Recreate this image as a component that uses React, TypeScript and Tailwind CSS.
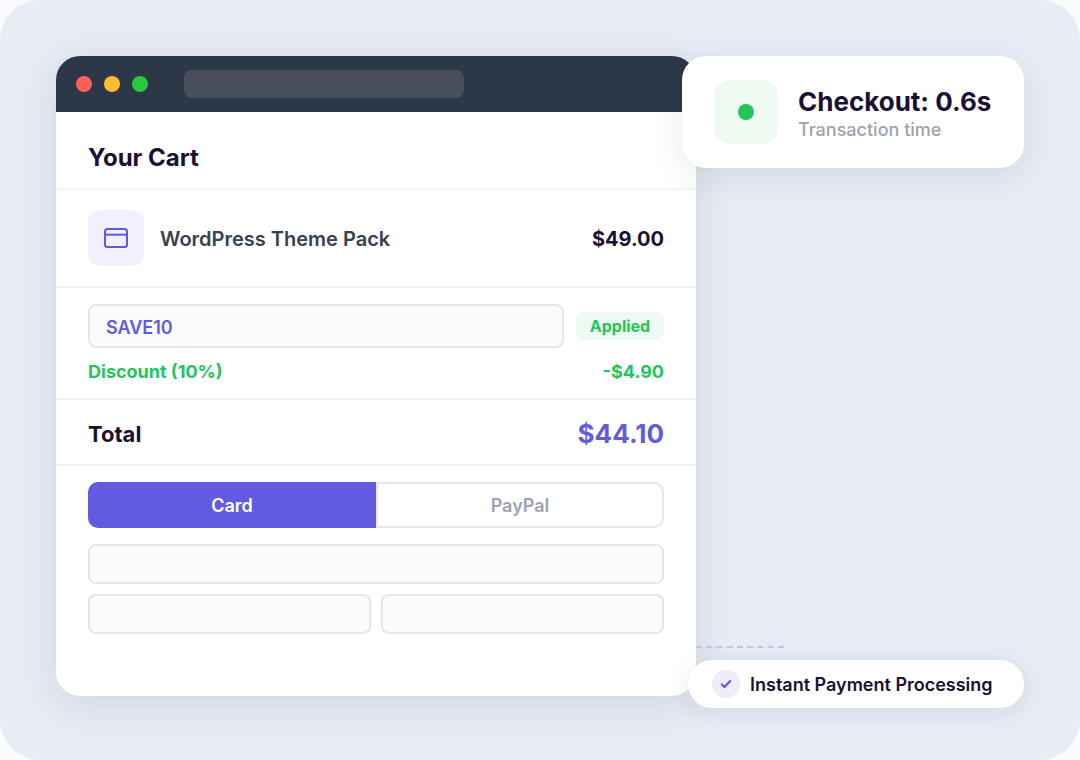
import { useState } from 'react'

const windowDots = [
  { name: 'close', className: 'bg-[#ff5f57]' },
  { name: 'minimize', className: 'bg-[#febc2e]' },
  { name: 'zoom', className: 'bg-[#28c840]' },
]

const fieldClass = 'h-10 w-full min-w-0 rounded-lg border-2 border-[#e5e7eb] bg-[#fafbfd] px-4 text-lg text-[#374151] outline-none'

function BrowserBar() {
  return (
    <div className="flex h-14 items-center gap-3 rounded-t-3xl bg-[#2c3747] px-5">
      {windowDots.map((dot) => (
        <span key={dot.name} className={`size-4 rounded-full ${dot.className}`} />
      ))}
      <div className="ml-6 h-7 w-70 rounded-lg bg-[#474f5d]" />
    </div>
  )
}

function WindowIcon() {
  return (
    <svg className="size-7" viewBox="0 0 28 28" fill="none" stroke="#6259d3" strokeWidth="2">
      <rect x="3" y="5" width="22" height="18" rx="2.5" />
      <path d="M3 10.7h22" />
    </svg>
  )
}

function PaymentTabs() {
  const [method, setMethod] = useState('card')
  const active = 'border-[#635bdf] bg-[#635bdf] text-white'
  const idle = 'border-[#e5e7eb] bg-white text-[#9ca3af]'

  return (
    <div className="flex h-[46px]">
      <button
        type="button"
        aria-pressed={method === 'card'}
        onClick={() => setMethod('card')}
        className={`flex-1 rounded-l-[10px] border-2 pt-0.5 text-lg font-semibold ${method === 'card' ? active : idle}`}
      >
        Card
      </button>
      <button
        type="button"
        aria-pressed={method === 'paypal'}
        onClick={() => setMethod('paypal')}
        className={`flex-1 rounded-r-[10px] border-2 pt-0.5 text-lg font-semibold ${method === 'paypal' ? active : idle}`}
      >
        PayPal
      </button>
    </div>
  )
}

function CartWindow() {
  const [coupon, setCoupon] = useState('SAVE10')

  return (
    <main className="relative w-full max-w-[640px] rounded-3xl bg-white shadow-[0_8px_40px_rgba(30,50,60,0.12)]">
      <BrowserBar />

      <header className="border-b-2 border-[#f1f3f5] px-8 pt-[30px] pb-3.5">
        <h1 className="text-2xl font-bold text-[#1a1033]">Your Cart</h1>
      </header>

      <section className="flex items-center gap-4 border-b-2 border-[#f1f3f5] px-8 py-5">
        <div className="flex size-14 shrink-0 items-center justify-center rounded-xl bg-[#f2f0fd]">
          <WindowIcon />
        </div>
        <span className="flex-1 pt-0.5 text-xl font-semibold text-[#374151]">WordPress Theme Pack</span>
        <span className="pt-0.5 text-xl font-bold text-[#1a1033]">$49.00</span>
      </section>

      <section className="border-b-2 border-[#f1f3f5] px-8 pt-4 pb-3.5">
        <div className="flex items-center gap-3">
          <input
            type="text"
            aria-label="Coupon code"
            value={coupon}
            onChange={(e) => setCoupon(e.target.value)}
            className="h-11 min-w-0 flex-1 rounded-lg border-2 border-[#e5e7eb] bg-[#fafbfd] px-4 pt-0.5 text-lg font-semibold text-[#635bdf] outline-none"
          />
          <span className="flex h-7 w-22 items-center justify-center rounded-lg bg-[#ecfaf2] text-base font-bold text-[#22c55e]">
            Applied
          </span>
        </div>
        <div className="mt-3 flex justify-between text-lg leading-6 font-bold text-[#22c55e]">
          <span>Discount (10%)</span>
          <span>-$4.90</span>
        </div>
      </section>

      <section className="flex items-center justify-between border-b-2 border-[#f1f3f5] px-8 pt-[18px] pb-3.5">
        <span className="text-[22px] leading-8 font-bold text-[#1a1033]">Total</span>
        <span className="text-[26px] leading-8 font-bold text-[#635bdf]">$44.10</span>
      </section>

      <section className="px-8 pt-4 pb-[62px]">
        <PaymentTabs />
        <div className="mt-4 grid grid-cols-2 gap-[10px]">
          <div className="col-span-2 flex">
            <input type="text" aria-label="Card number" className={fieldClass} />
          </div>
          <input type="text" aria-label="Expiry date" className={fieldClass} />
          <input type="text" aria-label="Security code" className={fieldClass} />
        </div>
      </section>
    </main>
  )
}

export default function App() {
  return (
    <div className="min-h-screen bg-[#fafbfc] font-['Inter',sans-serif]">
      <div className="relative min-h-screen rounded-[40px] bg-[#e7ecf5] px-14 pt-14 pb-16">
        <CartWindow />

        {/* Speed badge */}
        <div className="absolute top-14 right-14 flex w-[342px] items-center gap-5 rounded-3xl bg-white px-8 py-6 shadow-[0_8px_32px_rgba(30,50,60,0.1)]">
          <div className="flex size-16 shrink-0 items-center justify-center rounded-2xl bg-[#ecfaf2]">
            <span className="size-4 rounded-full bg-[#22c55e]" />
          </div>
          <div className="pt-1 whitespace-nowrap">
            <p className="text-[26px] leading-8 font-bold text-[#1a1033]">Checkout: 0.6s</p>
            <p className="text-lg leading-6 font-medium text-[#9ca3af]">Transaction time</p>
          </div>
        </div>

        {/* Connector from the cart to the pill */}
        <div className="absolute right-[296px] bottom-28 w-22 border-t-2 border-dashed border-[#c8c5ec]" />

        <div className="absolute right-14 bottom-13 flex h-12 w-84 items-center gap-[10px] rounded-full bg-white px-6 shadow-[0_4px_24px_rgba(30,50,60,0.1)]">
          <span className="flex size-7 shrink-0 items-center justify-center rounded-full bg-[#efedfc]">
            <svg className="size-3" viewBox="0 0 12 12" fill="none" stroke="#635bdf" strokeWidth="2.2" strokeLinecap="round" strokeLinejoin="round">
              <path d="M1.8 6.5 4.5 9l5.7-6" />
            </svg>
          </span>
          <span className="pt-0.5 text-lg font-semibold whitespace-nowrap text-[#1a1033]">Instant Payment Processing</span>
        </div>
      </div>
    </div>
  )
}
